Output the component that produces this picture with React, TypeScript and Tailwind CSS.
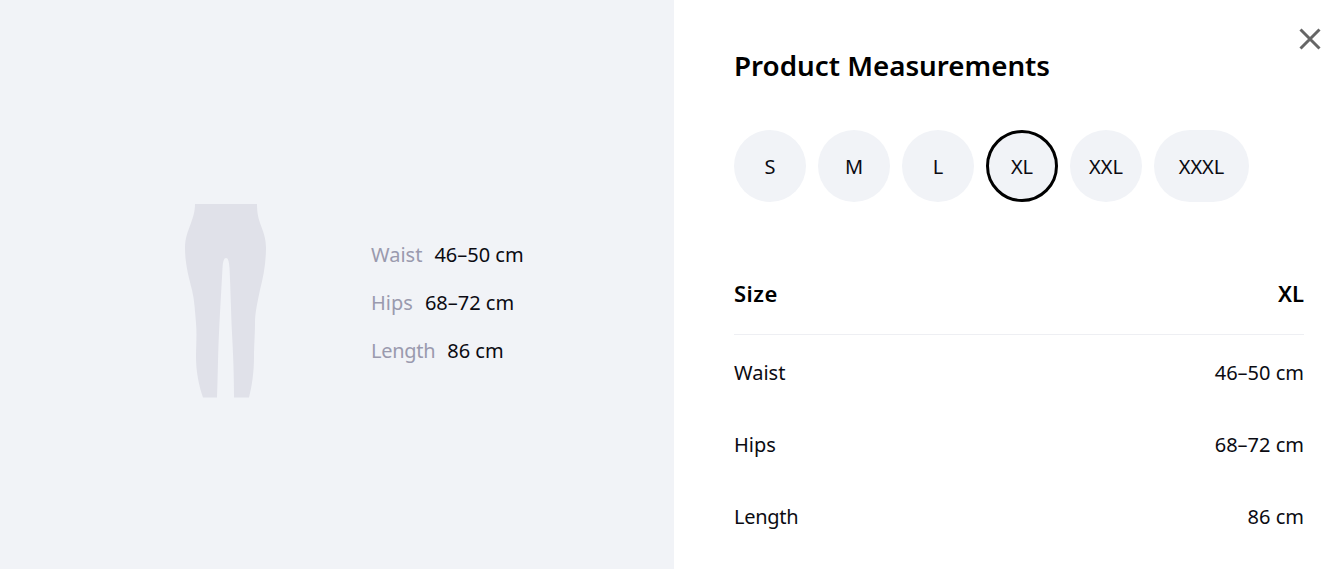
import React from "react";

const font = "font-['Noto_Sans','Open_Sans',sans-serif]";

function Leggings() {
  return (
    <svg width="84" height="196" viewBox="0 0 84 196" className="shrink-0">
      <path
        fill="#e0e1e9"
        d="M10 2 H72 C72 10 73 15 75 21 C78 29 81 36 81 46 C81 62 78 76 75 88 C73 98 70 110 70 121 C70 132 69 145 69 155 C69 170 67 184 64 195.5 H49 C49 170 48 150 47 131 C46 110 45.5 85 44.5 66 C44 59 43 56 41 56 C39 56 38 59 37.5 66 C36.5 85 35 110 34 131 C33 150 33 170 32 195.5 H18 C14 184 11 170 11 155 C11 145 12 132 11 121 C10 110 9.5 98 7 88 C4 76 0 62 0 46 C0 36 3 29 6 21 C8 15 10 10 10 2 Z"
      />
    </svg>
  );
}

function LeftRow({ label, value, tight }: { label: string; value: string; tight?: boolean }) {
  return (
    <div className="flex h-12 items-center gap-3 text-[20px]">
      <span className={"text-[#9a9aae] " + (tight ? "tracking-[-0.3px]" : "")}>{label}</span>
      <span className="text-[#0b0b12]">{value}</span>
    </div>
  );
}

function SizeChip({ label, active, wide }: { label: string; active?: boolean; wide?: boolean }) {
  return (
    <div
      className={
        "flex h-[72px] items-center justify-center rounded-full bg-[#f1f3f7] pt-[2px] text-[20px] text-[#0b0b12] " +
        (wide ? "w-[95px] " : "w-[72px] ") +
        (active ? "border-[3px] border-black" : "")
      }
    >
      {label}
    </div>
  );
}

function TableRow({ label, value, tight }: { label: string; value: string; tight?: boolean }) {
  return (
    <div className="flex h-[72px] items-center justify-between pt-[4px] text-[20px] text-[#0b0b12]">
      <span className={tight ? "tracking-[-0.3px]" : ""}>{label}</span>
      <span>{value}</span>
    </div>
  );
}

export default function App() {
  return (
    <div className={"flex h-[569px] w-[1344px] overflow-hidden bg-white " + font}>
      <div className="flex h-full w-[674px] shrink-0 items-start bg-[#f1f3f7] pl-[185px] pt-[202px]">
        <Leggings />
        <div className="ml-[102px] mt-[29px] flex flex-col">
          <LeftRow label="Waist" value="46–50 cm" />
          <LeftRow label="Hips" value="68–72 cm" />
          <LeftRow label="Length" value="86 cm" tight />
        </div>
      </div>
      <div className="relative flex-1 pl-[60px] pr-[40px] pt-[43px]">
        <button className="absolute right-[22px] top-[27px] text-[#666666]">
          <svg width="24" height="24" viewBox="0 0 24 24" fill="none" stroke="currentColor" strokeWidth="3">
            <path d="M2.5 2.5 L21.5 21.5 M21.5 2.5 L2.5 21.5" />
          </svg>
        </button>
        <h1 className="text-[27.75px] font-semibold leading-[44px] text-black">Product Measurements</h1>
        <div className="mt-[43px] flex gap-3">
          <SizeChip label="S" />
          <SizeChip label="M" />
          <SizeChip label="L" />
          <SizeChip label="XL" active />
          <SizeChip label="XXL" />
          <SizeChip label="XXXL" wide />
        </div>
        <div className="mt-[56px] flex h-[77px] items-center justify-between border-b border-[#eeeff3] pb-[6px] text-[22px] font-semibold text-black">
          <span className="tracking-[0.5px]">Size</span>
          <span>XL</span>
        </div>
        <TableRow label="Waist" value="46–50 cm" />
        <TableRow label="Hips" value="68–72 cm" />
        <TableRow label="Length" value="86 cm" tight />
      </div>
    </div>
  );
}
